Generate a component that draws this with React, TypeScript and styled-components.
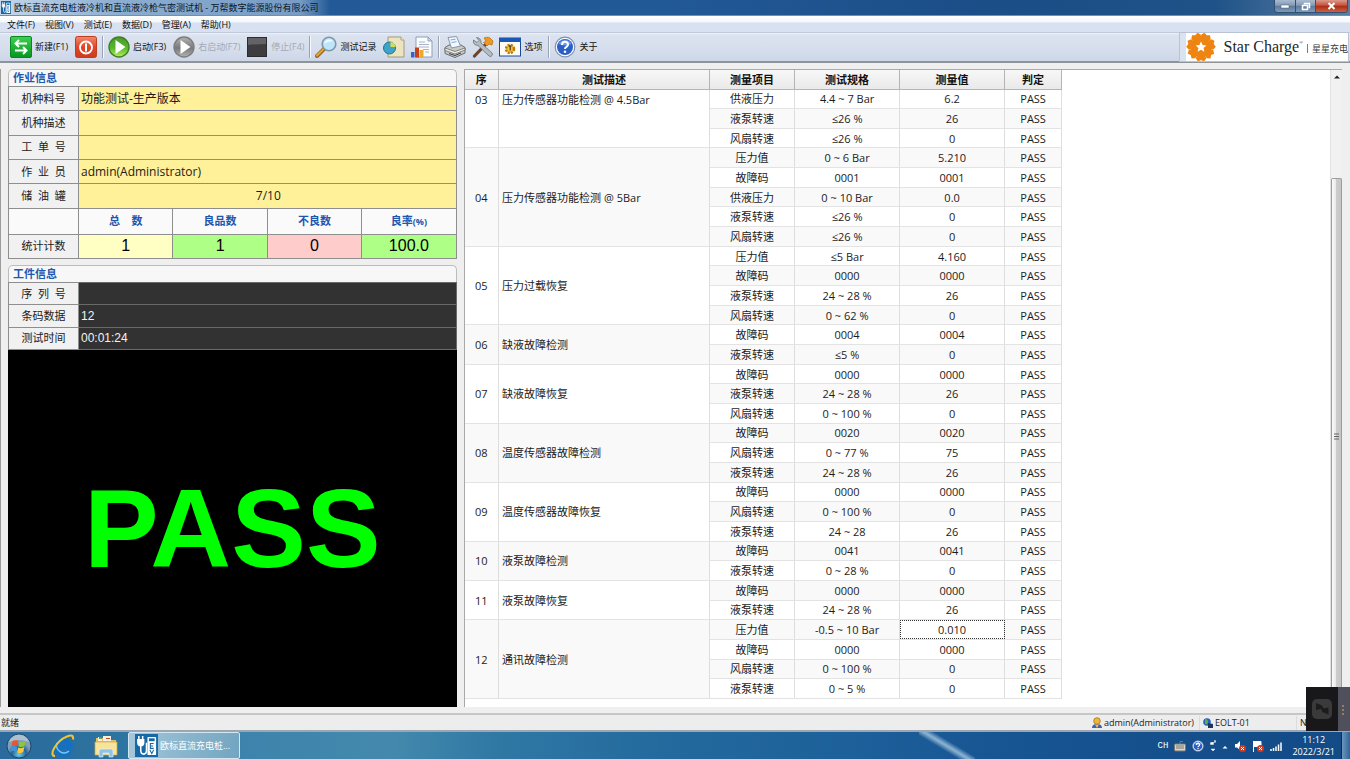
import React from "react";
import styled, { createGlobalStyle, css } from "styled-components";

const uiFont = `"Open Sans", "Noto Sans CJK SC", sans-serif`;

const GlobalStyle = createGlobalStyle`
  * { box-sizing: border-box; }
  html, body { margin: 0; padding: 0; }
  body { font-family: ${uiFont}; font-size: 11px; color: #1c1c1c; background: #efefef; }
  button { font-family: inherit; border: 0; background: none; padding: 0; margin: 0; color: inherit; }
  table { border-collapse: collapse; border-spacing: 0; }
`;

const Desktop = styled.div`
  display: flex;
  flex-direction: column;
  min-height: 100vh;
  position: relative;
  overflow: hidden;
`;

/* ---------- title bar ---------- */
const TitleBar = styled.header`
  flex: none;
  height: 16px;
  display: flex;
  align-items: flex-start;
  background:
    linear-gradient(90deg, rgba(205, 222, 240, 0.95) 0, rgba(150, 182, 215, 0.9) 120px, rgba(134, 167, 205, 0.85) 300px, rgba(60, 105, 155, 0) 330px),
    linear-gradient(90deg, #235a96 0%, #215896 50%, #1b4d86 75%, #1f5388 90%, #5c7ea3 100%);
  border-bottom: 1px solid #6f8fb5;
`;
const AppIcon = styled.svg`
  width: 10px;
  height: 13px;
  margin: 1px 3px 0 1px;
  flex: none;
`;
const TitleText = styled.h1`
  margin: 0;
  flex: 1;
  font-size: 9px;
  line-height: 15px;
  font-weight: 400;
  color: #0a1626;
  white-space: nowrap;
`;
const WindowButtons = styled.div`
  display: flex;
  height: 13px;
  margin-right: 2px;
  border: 1px solid #33506f;
  border-top: 0;
  border-radius: 0 0 4px 4px;
  overflow: hidden;
`;
const WindowButton = styled.button<{ $close?: boolean }>`
  width: ${(p) => (p.$close ? 32 : 20)}px;
  display: flex;
  align-items: center;
  justify-content: center;
  background: ${(p) =>
    p.$close
      ? "linear-gradient(#dc9a8c, #c4513a 45%, #a92c14 50%, #cf6040)"
      : "linear-gradient(#a9bbd0, #8299b5 45%, #5d7a9c 50%, #7f9ab8)"};
  & + & { border-left: 1px solid #33506f; }
`;

/* ---------- menu and toolbar ---------- */
const MenuBar = styled.nav`
  flex: none;
  height: 16px;
  display: flex;
  padding-left: 7px;
  gap: 10px;
  background: linear-gradient(#ffffff 0, #f4f7fc 6px, #d7e1f1 7px, #d9e2f1 100%);
`;
const MenuItem = styled.button`
  font-size: 9px;
  line-height: 15px;
  color: #101010;
  white-space: nowrap;
`;
const Toolbar = styled.div`
  flex: none;
  height: 31px;
  display: flex;
  align-items: stretch;
  padding-left: 10px;
  background: linear-gradient(#eef2f9 0, #dbe3f0 2px, #d6deed 60%, #ccd6e6 100%);
  border-top: 1px solid #c0cadb;
  border-bottom: 2px solid #8f9499;
`;
const ToolButton = styled.button<{ $gap?: number }>`
  display: flex;
  align-items: center;
  gap: 3px;
  margin-right: ${(p) => p.$gap ?? 7}px;
  font-size: 9px;
  line-height: 14px;
  white-space: nowrap;
  color: #101010;
  &:disabled { color: #a2a8b2; }
  svg { width: 22px; height: 22px; flex: none; display: block; }
`;
const Divider = styled.span`
  width: 2px;
  margin: 3px 4px 3px 0;
  border-left: 1px solid #99a3b4;
  border-right: 1px solid #f5f8fc;
`;
const Brand = styled.div`
  margin-left: auto;
  margin-right: 2px;
  display: flex;
  align-items: center;
  background: #ffffff;
  border-left: 6px solid #dbe3f0;
  outline: 1px solid #b9c3d3;
  white-space: nowrap;
  svg { width: 30px; height: 30px; flex: none; }
`;
const BrandName = styled.span`
  margin-left: 7px;
  font-family: "Liberation Serif", serif;
  font-size: 16px;
  line-height: 24px;
  color: #262626;
  sup { font-size: 5px; line-height: 0; vertical-align: 8px; }
`;
const BrandLocal = styled.span`
  margin: 2px 0 0 4px;
  padding-left: 4px;
  border-left: 1px solid #7c7c7c;
  font-size: 9px;
  line-height: 9px;
  color: #3a3a3a;
`;

/* ---------- main area ---------- */
const Main = styled.main`
  flex: 1;
  display: grid;
  grid-template-columns: 19fr 36fr;
  background: #efefef;
  padding: 6px 8px 6px 0;
`;
const Side = styled.section`
  display: flex;
  flex-direction: column;
  border-left: 1px solid #9c9c9c;
  padding: 0 7px;
  min-width: 0;
`;
const Group = styled.section<{ $grow?: boolean }>`
  display: flex;
  flex-direction: column;
  flex: ${(p) => (p.$grow ? 1 : "none")};
  & + & { margin-top: 6px; }
`;
const GroupTitle = styled.h2`
  margin: 0;
  height: 17px;
  padding-left: 4px;
  font-size: 11px;
  line-height: 15px;
  font-weight: 700;
  color: #1f57ae;
  background: #f7f7f8;
  border: 1px solid #bcbcbc;
  border-bottom: 0;
  border-radius: 5px 5px 0 0;
`;
const InfoTable = styled.table<{ $height: number }>`
  width: 100%;
  height: ${(p) => p.$height}px;
  table-layout: fixed;
  td, th { border: 1px solid #8e8e8e; padding: 0; line-height: 16px; }
`;
const LabelCol = styled.col`
  width: 70px;
`;
const RowLabel = styled.th`
  font-size: 11px;
  font-weight: 400;
  text-align: center;
  white-space: pre;
  background: #f1f1f1;
  color: #1c1c1c;
`;
const FieldCell = styled.td<{ $center?: boolean }>`
  background: #fff09a;
  font-size: 12px;
  text-align: ${(p) => (p.$center ? "center" : "left")};
  && { padding-left: 2px; }
`;
const StatHead = styled.th`
  background: #fafafb;
  color: #1f57ae;
  font-size: 11px;
  font-weight: 700;
  white-space: pre;
  small { font-size: 9px; }
`;
const tones = { total: "#ffffc4", good: "#adff86", bad: "#ffcccc" };
const StatCell = styled.td<{ $tone: keyof typeof tones }>`
  background: ${(p) => tones[p.$tone]};
  font-family: "Liberation Sans", sans-serif;
  font-size: 16px;
  text-align: center;
  color: #000;
`;
const DarkCell = styled.td`
  background: #323232;
  color: #f2f2f2;
  font-family: "Liberation Sans", sans-serif;
  font-size: 12px;
  && { padding-left: 2px; border-color: #6a6a6a; }
`;
const Verdict = styled.div`
  flex: 1;
  min-height: 130px;
  display: flex;
  align-items: center;
  justify-content: center;
  background: #000;
  color: #00ff00;
  font-family: "Liberation Sans", sans-serif;
  font-size: 112px;
  line-height: 112px;
  font-weight: 700;
`;

const ResultPanel = styled.section`
  display: flex;
  min-width: 0;
  background: #fff;
  border-left: 1px solid #a8a8a8;
  border-top: 1px solid #aaaaaa;
`;
const TableArea = styled.div`
  flex: 1;
  min-width: 0;
  padding-bottom: 8px;
`;
const ResultTable = styled.table`
  width: 597px;
  height: 100%;
  table-layout: fixed;
  font-size: 11px;
  line-height: 15px;
  text-align: center;
`;
const Col = styled.col<{ $w: number }>`
  width: ${(p) => p.$w}px;
`;
const HeadCell = styled.th`
  height: 19px;
  padding: 0;
  font-weight: 700;
  color: #111;
  background: linear-gradient(#f7f7f7, #e9e9e9);
  border-right: 1px solid #b4b4b4;
  border-bottom: 1px solid #b4b4b4;
`;
const cellBase = css<{ $odd?: boolean }>`
  padding: 0;
  background: ${(p) => (p.$odd ? "#f9f9f9" : "#ffffff")};
  border-right: 1px solid #dedede;
  border-bottom: 1px solid #e3e3e3;
`;
const Cell = styled.td<{ $odd?: boolean; $selected?: boolean }>`
  ${cellBase}
  ${(p) => p.$selected && css`outline: 1px dotted #333; outline-offset: -1px; background: #fff;`}
`;
const StepCell = styled.td<{ $odd?: boolean; $top?: boolean; $left?: boolean }>`
  ${cellBase}
  vertical-align: ${(p) => (p.$top ? "top" : "middle")};
  padding-top: ${(p) => (p.$top ? 2 : 0)}px;
  padding-left: ${(p) => (p.$left ? 3 : 0)}px;
  text-align: ${(p) => (p.$left ? "left" : "center")};
`;

const ScrollTrack = styled.div`
  width: 12px;
  flex: none;
  display: flex;
  flex-direction: column;
  background: #f1f1f1;
  border-left: 1px solid #e2e2e2;
`;
const ScrollArrow = styled.button`
  height: 17%;
  display: flex;
  justify-content: center;
  align-items: flex-start;
  padding-top: 5px;
`;
const ScrollThumb = styled.div`
  flex: 1;
  display: flex;
  align-items: center;
  justify-content: center;
  padding-bottom: 14px;
  border: 1px solid #9d9d9d;
  border-bottom: 0;
  border-radius: 2px 2px 0 0;
  background: linear-gradient(90deg, #fafafa, #e8e8e8 45%, #cccccc 50%, #c6c6c6);
`;

/* ---------- status bar ---------- */
const StatusBar = styled.footer`
  flex: none;
  height: 18px;
  display: flex;
  align-items: center;
  padding-left: 1px;
  font-size: 9px;
  line-height: 14px;
  background: #ededed;
  border-top: 2px solid #c6c6c6;
  border-bottom: 1px solid #9aa7b3;
`;
const StatusText = styled.span`
  flex: 1;
`;
const StatusItem = styled.span<{ $w: number }>`
  width: ${(p) => p.$w}px;
  display: flex;
  align-items: center;
  gap: 2px;
  padding-left: 3px;
  white-space: nowrap;
  & + & { border-left: 1px solid #dcdcdc; }
  svg { width: 10px; height: 12px; flex: none; }
`;

/* ---------- taskbar ---------- */
const Taskbar = styled.div`
  flex: none;
  height: 28px;
  display: flex;
  align-items: center;
  color: #fff;
  border-top: 1px solid #7fb0cf;
  background:
    linear-gradient(31deg, transparent 40%, rgba(180, 208, 230, 0.7) 49%, rgba(180, 208, 230, 0.7) 51%, transparent 60%) 71% 0 / 56px 28px no-repeat,
    linear-gradient(90deg, #2a6a9c 0%, #2d74a0 9%, #3d83ab 18%, #4489ad 29%, #2f78a4 37%, #23699d 50%, #1d609a 63%, #175492 75%, #124b86 100%);
`;
const LaunchButton = styled.button<{ $gap: number }>`
  flex: none;
  margin-left: ${(p) => p.$gap}px;
  svg { display: block; width: 26px; height: 26px; }
`;
const TaskButton = styled.button`
  align-self: stretch;
  width: 112px;
  margin-left: 9px;
  padding-left: 6px;
  display: flex;
  align-items: center;
  gap: 2px;
  font-size: 9px;
  line-height: 14px;
  white-space: nowrap;
  color: #fff;
  border: 1px solid #d4e6f0;
  border-radius: 2px;
  background: linear-gradient(100deg, #a5c9dc, #8fb9cf 40%, #72a5c1);
  svg { width: 23px; height: 23px; flex: none; }
`;
const Tray = styled.div`
  margin-left: auto;
  display: flex;
  align-items: center;
  gap: 6px;
  font-family: "Liberation Mono", monospace;
  font-size: 9px;
  svg { height: 12px; flex: none; }
`;
const Clock = styled.time`
  margin: 0 6px 0 10px;
  font-size: 9px;
  line-height: 12px;
  text-align: center;
`;
const ShowDesktop = styled.button`
  width: 9px;
  align-self: stretch;
  border-left: 1px solid #0d2f55;
  background: linear-gradient(90deg, #6d95bb, #2f659a);
`;
const FloatingTool = styled.button`
  position: absolute;
  right: 0;
  bottom: 28px;
  width: 44px;
  height: 44px;
  display: flex;
  background: #18181a;
  svg { display: block; }
`;

/* ---------- drawings ---------- */
const EvGlyph = () => (
  <>
    <rect width="24" height="24" fill="#1769a6" />
    <path d="M4 2v4M8 2v4M3 6h6v3q0 3-3 3t-3-3zM6 12v5q0 4 3 4t3-4V9" stroke="#fff" strokeWidth="1.6" fill="none" />
    <path d="M3 6h6v3q0 3-3 3t-3-3z" fill="#fff" />
    <rect x="13" y="3" width="9" height="19" rx="1" fill="#fff" />
    <rect x="14.5" y="4.5" width="6" height="3" fill="#1769a6" />
    <path d="M19.500 10H16v5h3.500M16 12.500h3M15.500 16.500l2 4 2-4" stroke="#1769a6" strokeWidth="1.100" fill="none" />
  </>
);
const NewIcon = () => (
  <svg viewBox="0 0 22 22">
    <defs><linearGradient id="gn" x2="0" y2="1"><stop stopColor="#3fd052" /><stop offset="1" stopColor="#06951f" /></linearGradient></defs>
    <rect x=".5" y=".5" width="21" height="21" rx="1.500" fill="url(#gn)" stroke="#078a1d" />
    <path d="M17 7.500H5.500M9 4L5.500 7.500 9 11M5 14.500h11.500M13 11l3.500 3.500L13 18" stroke="#fff" strokeWidth="2" fill="none" />
  </svg>
);
const PowerIcon = () => (
  <svg viewBox="0 0 22 22">
    <defs><linearGradient id="gp" x2="0" y2="1"><stop stopColor="#f08a6c" /><stop offset=".5" stopColor="#df4628" /><stop offset="1" stopColor="#d23a1c" /></linearGradient></defs>
    <rect x=".5" y=".5" width="21" height="21" rx="2" fill="url(#gp)" stroke="#c23c20" />
    <circle cx="11" cy="11.500" r="6" stroke="#fff" strokeWidth="1.800" fill="none" />
    <path d="M11 7.500v8" stroke="#fff" strokeWidth="2" />
  </svg>
);
const PlayIcon = ({ off }: { off?: boolean }) => {
  const id = off ? "gy" : "gg";
  return (
    <svg viewBox="0 0 22 22">
      <defs><linearGradient id={id} x2="0" y2="1"><stop stopColor={off ? "#b5b5b5" : "#4b9b2c"} /><stop offset=".55" stopColor={off ? "#787878" : "#55b82a"} /><stop offset="1" stopColor={off ? "#b4b4b4" : "#b9ee5a"} /></linearGradient></defs>
      <circle cx="11" cy="11" r="10" fill={`url(#${id})`} stroke={off ? "#7c7c7c" : "#3e7f27"} strokeWidth="1.400" />
      <path d="M7.500 4L17.500 11l-10 7z" fill="#fff" />
    </svg>
  );
};
const StopIcon = () => (
  <svg viewBox="0 0 22 22">
    <rect x="1.500" y="1.500" width="19" height="19" fill="#3d3d3f" stroke="#2b2b2b" />
    <path d="M2 2h18v6q-9 0-18 1z" fill="#636366" />
  </svg>
);
const SearchIcon = () => (
  <svg viewBox="0 0 22 22">
    <path d="M9 13l-7 7" stroke="#9a6a24" strokeWidth="4" strokeLinecap="round" />
    <path d="M8.500 13L2 19.500" stroke="#e1a33f" strokeWidth="2" strokeLinecap="round" />
    <circle cx="14" cy="8" r="6.800" fill="#bfe5f8" stroke="#7e97ad" strokeWidth="1.600" />
    <path d="M9.500 8q0-4.500 5-4.500 2.500 0 3.500 2-5-1-8.500 2.500z" fill="#f4fcff" />
  </svg>
);
const PieDocIcon = () => (
  <svg viewBox="0 0 22 22">
    <path d="M5 1h13l3 3v17H5z" fill="#ece3c1" stroke="#a49b7b" />
    <path d="M18 1v3h3" fill="#fff" stroke="#a49b7b" />
    <circle cx="6.500" cy="12" r="6" fill="#3da3c8" stroke="#22748f" />
    <path d="M7.500 11V6a5.500 5.500 0 0 1 5 5z" fill="#d5dd54" />
  </svg>
);
const ChartDocIcon = () => (
  <svg viewBox="0 0 22 22">
    <path d="M5 1h12l4 4v16H5z" fill="#fbfcfe" stroke="#8fa0b8" />
    <path d="M17 1v4h4z" fill="#d5dfed" stroke="#8fa0b8" />
    <path d="M8 6h6M8 8.500h10M8 11h10M12 13.500h6M14 16h4" stroke="#a9b4c6" />
    <rect x="0" y="16" width="3.500" height="5.500" fill="#3763c4" />
    <rect x="4" y="11.500" width="4" height="10" fill="#c6401d" />
    <rect x="8.500" y="14" width="4" height="7.500" fill="#eba928" />
  </svg>
);
const PrinterIcon = () => (
  <svg viewBox="0 0 22 22">
    <path d="M1 11.500L5 9h12l4 2.500v5.500L11 21.500 1 17.500z" fill="#c9c9c6" stroke="#6c6c6c" />
    <path d="M4 1.500L12.500.5 16.500 10 7.500 12z" fill="#f3f8ff" stroke="#8696ac" />
    <path d="M6.500 4l5-.8M7.500 6.500l5-.8" stroke="#77a7dd" />
    <path d="M1 12l10 3.500L21 12v2l-10 4-10-3.500z" fill="#ededeb" stroke="#6c6c6c" strokeWidth=".8" />
    <path d="M5 17.500l6 2 6-2.500" stroke="#3f3f3f" fill="none" />
  </svg>
);
const ToolsIcon = () => (
  <svg viewBox="0 0 22 22">
    <path d="M13.500 8.500L2.500 20" stroke="#6e4327" strokeWidth="3.200" strokeLinecap="round" />
    <path d="M12 2q5-2 7 1l2 2-1 4-3-1-2 2-3.500-3.500L14 5z" fill="#ef981f" stroke="#b26a12" strokeWidth=".7" />
    <path d="M1.500 4q-1 5 4.500 5.500L17 20q2 1.500 3-.5t0-2.500L9 7q.5-5-4.500-5.500l2.500 3-2 2z" fill="#b7bcc2" stroke="#6b7279" strokeWidth=".8" />
  </svg>
);
const OptionsIcon = () => (
  <svg viewBox="0 0 22 22">
    <rect x=".5" y="2" width="21" height="18" fill="#fdfdf5" stroke="#164a9f" />
    <path d="M0 2h22v4H0z" fill="#1b57b4" />
    <circle cx="11" cy="13" r="4" fill="#f4c33b" stroke="#b87a10" strokeWidth="2.500" strokeDasharray="2 1.200" />
    <path d="M10 10.500l1.200-1v5" stroke="#222" fill="none" />
  </svg>
);
const HelpIcon = () => (
  <svg viewBox="0 0 22 22">
    <circle cx="11" cy="11" r="9.800" fill="#fff" stroke="#7d8eae" strokeWidth="1.200" />
    <circle cx="11" cy="11" r="8" fill="#2a5fc7" />
    <path d="M4.500 8a7.200 7.200 0 0 1 13 0q-6 3-13 0z" fill="#6e9aec" />
    <path d="M8 9q0-3.200 3-3.200T14 8.600q0 1.500-1.500 2.300T11 13" stroke="#fff" strokeWidth="2" fill="none" />
    <circle cx="11" cy="15.700" r="1.300" fill="#fff" />
  </svg>
);
const petals = Array.from({ length: 7 }, (_, i) => (i * 360) / 7);
const StarLogo = () => (
  <svg viewBox="-15 -15 30 30">
    {petals.map((a) => (
      <path key={a} transform={`rotate(${a + 180 / 7})`} d="M-3.500-6L-5.200-11.500-3-14.500 0-13 3-14.500 5.200-11.500 3.500-6z" fill="#ee8411" />
    ))}
    <circle r="8.500" fill="#ee8411" />
    <path d="M0-5.500L1.600-1.900 5.400-1.600 2.500 1 3.400 4.800 0 2.800-3.400 4.800-2.500 1-5.400-1.600-1.600-1.900z" fill="#fff" />
  </svg>
);

/* ---------- data ---------- */
type Line = [string, string, string];
const steps: { no: string; name: string; lines: Line[] }[] = [
  { no: "03", name: "压力传感器功能检测 @ 4.5Bar", lines: [["供液压力", "4.4 ~ 7 Bar", "6.2"], ["液泵转速", "≤26 %", "26"], ["风扇转速", "≤26 %", "0"]] },
  { no: "04", name: "压力传感器功能检测 @ 5Bar", lines: [["压力值", "0 ~ 6 Bar", "5.210"], ["故障码", "0001", "0001"], ["供液压力", "0 ~ 10 Bar", "0.0"], ["液泵转速", "≤26 %", "0"], ["风扇转速", "≤26 %", "0"]] },
  { no: "05", name: "压力过载恢复", lines: [["压力值", "≤5 Bar", "4.160"], ["故障码", "0000", "0000"], ["液泵转速", "24 ~ 28 %", "26"], ["风扇转速", "0 ~ 62 %", "0"]] },
  { no: "06", name: "缺液故障检测", lines: [["故障码", "0004", "0004"], ["液泵转速", "≤5 %", "0"]] },
  { no: "07", name: "缺液故障恢复", lines: [["故障码", "0000", "0000"], ["液泵转速", "24 ~ 28 %", "26"], ["风扇转速", "0 ~ 100 %", "0"]] },
  { no: "08", name: "温度传感器故障检测", lines: [["故障码", "0020", "0020"], ["风扇转速", "0 ~ 77 %", "75"], ["液泵转速", "24 ~ 28 %", "26"]] },
  { no: "09", name: "温度传感器故障恢复", lines: [["故障码", "0000", "0000"], ["风扇转速", "0 ~ 100 %", "0"], ["液泵转速", "24 ~ 28", "26"]] },
  { no: "10", name: "液泵故障检测", lines: [["故障码", "0041", "0041"], ["液泵转速", "0 ~ 28 %", "0"]] },
  { no: "11", name: "液泵故障恢复", lines: [["故障码", "0000", "0000"], ["液泵转速", "24 ~ 28 %", "26"]] },
  { no: "12", name: "通讯故障检测", lines: [["压力值", "-0.5 ~ 10 Bar", "0.010"], ["故障码", "0000", "0000"], ["风扇转速", "0 ~ 100 %", "0"], ["液泵转速", "0 ~ 5 %", "0"]] },
];
const rows = steps
  .flatMap((step, s) => step.lines.map((line, l) => ({ step, s, l, line })))
  .map((r, index) => ({ ...r, index }));
const menus = ["文件(F)", "视图(V)", "测试(E)", "数据(D)", "管理(A)", "帮助(H)"];
const jobFields = [["机种料号", "功能测试-生产版本"], ["机种描述", ""], ["工  单  号", ""], ["作  业  员", "admin(Administrator)"], ["储  油  罐", "7/10"]];
const partFields = [["序  列  号", ""], ["条码数据", "12"], ["测试时间", "00:01:24"]];
const columns: [string, number][] = [["序", 34], ["测试描述", 211], ["测量项目", 85], ["测试规格", 105], ["测量值", 105], ["判定", 57]];

export default function App() {
  return (
    <Desktop lang="zh-CN">
      <GlobalStyle />
      <TitleBar>
        <AppIcon viewBox="0 0 24 24" preserveAspectRatio="none"><EvGlyph /></AppIcon>
        <TitleText>欧标直流充电桩液冷机和直流液冷枪气密测试机 - 万帮数字能源股份有限公司</TitleText>
        <WindowButtons>
          <WindowButton aria-label="最小化"><svg width="10" height="6"><rect x="1" y="2" width="8" height="3" fill="#fff" stroke="#44566c" strokeWidth=".5" /></svg></WindowButton>
          <WindowButton aria-label="还原"><svg width="10" height="9"><path d="M3.500 2.500v-1h5v4h-1M1.500 3.500h5v4h-5z" fill="none" stroke="#fff" strokeWidth="1.500" /></svg></WindowButton>
          <WindowButton $close aria-label="关闭"><svg width="9" height="8"><path d="M1.500 1l6 6M7.500 1l-6 6" stroke="#fff" strokeWidth="2" /></svg></WindowButton>
        </WindowButtons>
      </TitleBar>
      <MenuBar>{menus.map((m) => <MenuItem key={m}>{m}</MenuItem>)}</MenuBar>
      <Toolbar>
        <ToolButton><NewIcon />新建(F1)</ToolButton>
        <ToolButton aria-label="电源" $gap={5}><PowerIcon /></ToolButton>
        <Divider />
        <ToolButton><PlayIcon />启动(F3)</ToolButton>
        <ToolButton disabled $gap={6}><PlayIcon off />右启动(F7)</ToolButton>
        <ToolButton disabled $gap={5}><StopIcon />停止(F4)</ToolButton>
        <Divider />
        <ToolButton><SearchIcon />测试记录</ToolButton>
        <ToolButton aria-label="统计" $gap={6}><PieDocIcon /></ToolButton>
        <ToolButton aria-label="报表" $gap={5}><ChartDocIcon /></ToolButton>
        <Divider />
        <ToolButton aria-label="打印" $gap={6}><PrinterIcon /></ToolButton>
        <ToolButton aria-label="工具" $gap={5}><ToolsIcon /></ToolButton>
        <ToolButton $gap={6}><OptionsIcon />选项</ToolButton>
        <Divider />
        <ToolButton><HelpIcon />关于</ToolButton>
        <Brand>
          <StarLogo />
          <BrandName>Star Charge<sup>®</sup></BrandName>
          <BrandLocal>星星充电</BrandLocal>
        </Brand>
      </Toolbar>

      <Main>
        <Side>
          <Group>
            <GroupTitle>作业信息</GroupTitle>
            <InfoTable $height={173}>
              <colgroup><LabelCol /><col /><col /><col /><col /></colgroup>
              <tbody>
                {jobFields.map(([label, value]) => (
                  <tr key={label}>
                    <RowLabel scope="row">{label}</RowLabel>
                    <FieldCell colSpan={4} $center={value === "7/10"}>{value}</FieldCell>
                  </tr>
                ))}
                <tr>
                  <StatHead as="td" />
                  <StatHead scope="col">{"总    数"}</StatHead>
                  <StatHead scope="col">良品数</StatHead>
                  <StatHead scope="col">不良数</StatHead>
                  <StatHead scope="col">良率<small>(%)</small></StatHead>
                </tr>
                <tr>
                  <RowLabel scope="row">统计计数</RowLabel>
                  <StatCell $tone="total">1</StatCell>
                  <StatCell $tone="good">1</StatCell>
                  <StatCell $tone="bad">0</StatCell>
                  <StatCell $tone="good">100.0</StatCell>
                </tr>
              </tbody>
            </InfoTable>
          </Group>
          <Group $grow>
            <GroupTitle>工件信息</GroupTitle>
            <InfoTable $height={68}>
              <colgroup><LabelCol /><col /></colgroup>
              <tbody>
                {partFields.map(([label, value]) => (
                  <tr key={label}>
                    <RowLabel scope="row">{label}</RowLabel>
                    <DarkCell>{value}</DarkCell>
                  </tr>
                ))}
              </tbody>
            </InfoTable>
            <Verdict>PASS</Verdict>
          </Group>
        </Side>

        <ResultPanel>
          <TableArea>
            <ResultTable>
              <colgroup>{columns.map(([name, w]) => <Col key={name} $w={w} />)}</colgroup>
              <thead>
                <tr>{columns.map(([name]) => <HeadCell key={name} scope="col">{name}</HeadCell>)}</tr>
              </thead>
              <tbody>
                {rows.map(({ step, s, l, line, index }) => {
                  const odd = index % 2 === 1;
                  return (
                    <tr key={index}>
                      {l === 0 && (
                        <>
                          <StepCell rowSpan={step.lines.length} $odd={s % 2 === 1} $top={s === 0}>{step.no}</StepCell>
                          <StepCell rowSpan={step.lines.length} $odd={s % 2 === 1} $top={s === 0} $left>{step.name}</StepCell>
                        </>
                      )}
                      <Cell $odd={odd}>{line[0]}</Cell>
                      <Cell $odd={odd}>{line[1]}</Cell>
                      <Cell $odd={odd} $selected={line[2] === "0.010"}>{line[2]}</Cell>
                      <Cell $odd={odd}>PASS</Cell>
                    </tr>
                  );
                })}
              </tbody>
            </ResultTable>
          </TableArea>
          <ScrollTrack>
            <ScrollArrow aria-label="向上滚动"><svg width="6" height="4"><path d="M0 3.500L3 .5l3 3z" fill="#222" /></svg></ScrollArrow>
            <ScrollThumb><svg width="5" height="7"><path d="M0 1h5M0 3.500h5M0 6h5" stroke="#666" /></svg></ScrollThumb>
          </ScrollTrack>
        </ResultPanel>
      </Main>

      <StatusBar>
        <StatusText>就绪</StatusText>
        <StatusItem $w={110}>
          <svg viewBox="0 0 10 12"><path d="M0 11q0-4 5-4t5 4z" fill="#3c62b8" /><path d="M3 7.500h4L5 11z" fill="#f0c040" /><circle cx="5" cy="4" r="3.300" fill="#eeb53d" stroke="#a8741a" strokeWidth=".8" /></svg>
          admin(Administrator)
        </StatusItem>
        <StatusItem $w={76}>
          <svg viewBox="0 0 10 12"><circle cx="4" cy="5" r="3.800" fill="#2b5fb8" /><path d="M2 2q3 0 3 3T2 7z" fill="#58b24c" /><path d="M5 6l5 1v4H5z" fill="#22335c" /></svg>
          EOLT-01
        </StatusItem>
        <StatusItem $w={21} />
        <StatusItem $w={54}>N</StatusItem>
      </StatusBar>

      <Taskbar>
        <LaunchButton $gap={6} aria-label="开始">
          <svg viewBox="0 0 26 26">
            <defs><radialGradient id="orb" cy=".85"><stop stopColor="#73cdea" /><stop offset=".6" stopColor="#24649a" /><stop offset="1" stopColor="#7f9fba" /></radialGradient></defs>
            <circle cx="13" cy="13" r="12" fill="url(#orb)" stroke="#1b4667" />
            <path d="M6.500 8q3-2 6 0l-1 5q-3-2-6 0z" fill="#e8562b" />
            <path d="M13.500 8.500q3 1.500 6-.5l-1 5q-3 2-6 .500z" fill="#8cc63e" />
            <path d="M5.300 14q3-2 6 0l-1 5q-3-2-6 0z" fill="#3f93dc" />
            <path d="M12.300 14.500q3 1.500 6-.5l-1 5q-3 2-6 .5z" fill="#fbc934" />
            <path d="M3 9q3-7.500 10-7.500T23 9q-10-4-20 0z" fill="#fff" opacity=".35" />
          </svg>
        </LaunchButton>
        <LaunchButton $gap={18} aria-label="浏览器">
          <svg viewBox="0 0 26 26">
            <path d="M20 17.500A7 7 0 1 1 20.500 14H8.500" stroke="#1470c4" strokeWidth="4.600" fill="none" />
            <path d="M19 18A7.500 7.500 0 0 1 7 10" stroke="#6fc8f7" strokeWidth="1.500" fill="none" />
            <path d="M5 23C-2 23 6 8 17 3.500q7-3 6 3" stroke="#f2c233" strokeWidth="2" fill="none" />
          </svg>
        </LaunchButton>
        <LaunchButton $gap={17} aria-label="资源管理器">
          <svg viewBox="0 0 26 26">
            <path d="M3 5h8l2 2h10v14H3z" fill="#e6c163" />
            <path d="M5 4h4v4H5zM10 3h8v5h-8z" fill="#f3f0e0" />
            <path d="M6 4h3v2H6z" fill="#51a24a" /><path d="M13 5h4v1h-4z" fill="#c54a30" />
            <path d="M2 9h22v13H2z" fill="#f8e39a" stroke="#cfa84a" strokeWidth=".7" />
            <path d="M6 24v-6q0-2 2-2h10q2 0 2 2v6h-4v-4h-6v4z" fill="#8fc4e8" stroke="#e8f5fc" strokeWidth=".6" />
          </svg>
        </LaunchButton>
        <TaskButton><svg viewBox="0 0 24 24"><EvGlyph /></svg>欧标直流充电桩...</TaskButton>
        <Tray>
          <span>CH</span>
          <svg width="12" viewBox="0 0 12 12"><rect x=".5" y="4" width="11" height="7" rx="1" fill="#d6d6cf" stroke="#77776f" /><path d="M2 6h8M2 8h8M6 4V1.500h3" stroke="#77776f" fill="none" /></svg>
          <HelpIcon />
          <svg width="6" viewBox="0 0 6 12"><path d="M1.500 2.500h3v-2h1v2M.5 2.500h3v2h-3zM1 9h4l-2 2z" fill="#fff" stroke="#fff" strokeWidth=".4" /></svg>
          <svg width="6" viewBox="0 0 6 12"><path d="M.5 8.500L3 6l2.500 2.500z" fill="#fff" /></svg>
          <svg width="12" viewBox="0 0 12 12"><path d="M1 4h2l3-3v9L3 7.500H1z" fill="#fff" /><circle cx="8.500" cy="8.500" r="3.500" fill="#d43a22" /><path d="M7 7l3 3M10 7l-3 3" stroke="#fff" /></svg>
          <svg width="12" viewBox="0 0 12 12"><path d="M1.500 1v11M2 1.500h7v5H2z" fill="#fff" stroke="#fff" /><circle cx="8.500" cy="8.500" r="3.500" fill="#d43a22" /><path d="M7 7l3 3M10 7l-3 3" stroke="#fff" /></svg>
          <svg width="12" viewBox="0 0 12 12"><path d="M1 11V9M3.500 11V8M6 11V6.500M8.500 11V4.500M11 11V2.500" stroke="#fff" strokeWidth="1.500" /></svg>
        </Tray>
        <Clock>11:12<br />2022/3/21</Clock>
        <ShowDesktop aria-label="显示桌面" />
      </Taskbar>

      <FloatingTool aria-label="远程工具">
        <svg width="44" height="44">
          <rect x="32" width="12" height="44" fill="#50505c" />
          <rect x="6" y="12" width="20" height="20" rx="5" fill="#3a3a3b" />
          <path d="M10 16l6 2.500 1.500 3 5-1v7l-6-2.500-1.500-3-5 1z" fill="#1c1c1d" />
          <path d="M37 18v2M37 22v2M37 26v2" stroke="#b08a62" strokeWidth="1.500" />
        </svg>
      </FloatingTool>
    </Desktop>
  );
}
